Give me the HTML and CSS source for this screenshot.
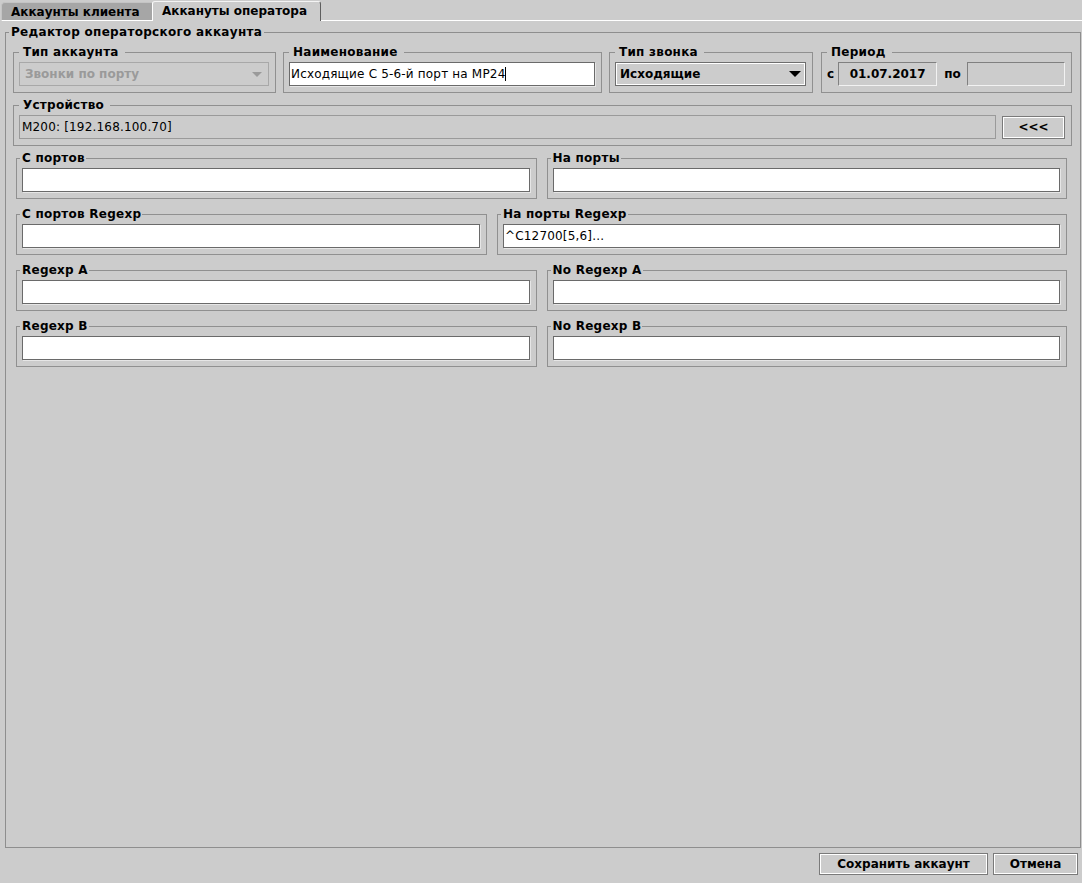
FILE: index.html
```html
<!DOCTYPE html>
<html lang="ru">
<head>
<meta charset="utf-8">
<title>Редактор операторского аккаунта</title>
<link rel="stylesheet" href="styles.css">
</head>
<body>
<div class="app">
  <div class="tabs">
    <div class="tab">Аккаунты клиента</div>
    <div class="tab active">Аккануты оператора</div>
    <div class="tab-fill"></div>
  </div>
  <div class="pane">
    <fieldset class="editor">
      <legend>Редактор операторского аккаунта</legend>
      <div class="editor-body">
        <div class="row row-top">
          <fieldset class="grp grp-top w-acct">
            <legend>Тип аккаунта</legend>
            <div class="grp-body">
              <div class="combo disabled"><span>Звонки по порту</span><span class="arrow"></span></div>
            </div>
          </fieldset>
          <fieldset class="grp grp-top w-name">
            <legend>Наименование</legend>
            <div class="grp-body">
              <div class="field">Исходящие С 5-6-й порт на МР24<span class="caret"></span></div>
            </div>
          </fieldset>
          <fieldset class="grp grp-top w-call">
            <legend>Тип звонка</legend>
            <div class="grp-body">
              <div class="combo"><span>Исходящие</span><span class="arrow"></span></div>
            </div>
          </fieldset>
          <fieldset class="grp grp-top w-period">
            <legend>Период</legend>
            <div class="grp-body period">
              <span class="plabel">с</span>
              <div class="date">01.07.2017</div>
              <span class="plabel plabel-to">по</span>
              <div class="date date-to"></div>
            </div>
          </fieldset>
        </div>

        <div class="row row-top row-gap">
          <fieldset class="grp grp-top w-full">
            <legend>Устройство</legend>
            <div class="grp-body device">
              <div class="field ro">M200: [192.168.100.70]</div>
              <button class="btn btn-back">&lt;&lt;&lt;</button>
            </div>
          </fieldset>
        </div>

        <div class="row row-grid row-gap">
          <fieldset class="grp grp-low half">
            <legend>С портов</legend>
            <div class="grp-body"><div class="field"></div></div>
          </fieldset>
          <fieldset class="grp grp-low half">
            <legend>На порты</legend>
            <div class="grp-body"><div class="field"></div></div>
          </fieldset>
        </div>

        <div class="row row-grid row-gap2">
          <fieldset class="grp grp-low w-from-re">
            <legend>С портов Regexp</legend>
            <div class="grp-body"><div class="field"></div></div>
          </fieldset>
          <fieldset class="grp grp-low w-to-re">
            <legend>На порты Regexp</legend>
            <div class="grp-body"><div class="field">^C12700[5,6]...</div></div>
          </fieldset>
        </div>

        <div class="row row-grid row-gap2">
          <fieldset class="grp grp-low half">
            <legend>Regexp A</legend>
            <div class="grp-body"><div class="field"></div></div>
          </fieldset>
          <fieldset class="grp grp-low half">
            <legend>No Regexp A</legend>
            <div class="grp-body"><div class="field"></div></div>
          </fieldset>
        </div>

        <div class="row row-grid row-gap2">
          <fieldset class="grp grp-low half">
            <legend>Regexp B</legend>
            <div class="grp-body"><div class="field"></div></div>
          </fieldset>
          <fieldset class="grp grp-low half">
            <legend>No Regexp B</legend>
            <div class="grp-body"><div class="field"></div></div>
          </fieldset>
        </div>
      </div>
    </fieldset>
    <div class="actions">
      <button class="btn btn-save">Сохранить аккаунт</button>
      <button class="btn btn-cancel">Отмена</button>
    </div>
  </div>
</div>
</body>
</html>
```

FILE: styles.css
```css
* { box-sizing: border-box; }
html, body { margin: 0; padding: 0; }
body {
  width: 1082px;
  height: 883px;
  overflow: hidden;
  background: #cccccc;
  font-family: "DejaVu Sans", "Liberation Sans", sans-serif;
  font-size: 12px;
  color: #000;
}
.app { display: flex; flex-direction: column; height: 883px; }

/* tabs */
.tabs { display: flex; height: 21px; align-items: flex-end; }
.tab {
  width: 151px;
  margin-left: 1px;
  height: 19px;
  padding: 1px 0 0 9px;
  background: #a6a6a6;
  border-top: 1px solid #c4c4c4;
  border-left: 1px solid #c4c4c4;
  border-bottom: 1px solid #ffffff;
  border-radius: 4px 0 0 0;
  font-weight: bold;
  line-height: 16px;
  white-space: nowrap;
}
.tab.active {
  width: 169px;
  margin-left: 0;
  height: 20px;
  padding: 1px 0 0 9px;
  background: #cccccc;
  border-top: 1px solid #f4f4f4;
  border-left: 1px solid #ffffff;
  border-right: 1px solid #5e5e5e;
  border-bottom: none;
  border-radius: 3px 3px 0 0;
  line-height: 17px;
}
.tab-fill { flex: 1; height: 1px; background: #ffffff; }

/* pane */
.pane { flex: 1; display: flex; flex-direction: column; min-height: 0; }

.editor {
  flex: 1;
  min-width: 0;
  margin: 4px 1px 0 5px;
  padding: 0;
  border: 1px solid #8e8e8e;
}
.editor > legend {
  margin-left: 3px;
  padding: 0 2px;
  font-weight: bold;
  line-height: 14px;
  letter-spacing: 0.3px;
  white-space: nowrap;
}
.editor-body { padding: 6px 8px 0 7px; }

.row { display: flex; }
.row-gap { margin-top: 5px; }
.row-gap2 { margin-top: 8px; }
.row-top { gap: 7px; }
.row-grid { gap: 10px; margin-left: 3px; margin-right: 5px; }

.grp {
  margin: 0;
  padding: 0;
  min-width: 0;
  border: 1px solid #909090;
}
.grp > legend {
  font-weight: bold;
  line-height: 14px;
  letter-spacing: 0.25px;
  white-space: nowrap;
}
.grp-top > legend { margin-left: 5px; padding: 0 6px 0 4px; }
.grp-low > legend { margin-left: 3px; padding: 0 1px 0 2px; }
.grp-body { padding: 3px 6px 6px 5px; }

.w-acct { width: 263px; }
.w-name { width: 319px; }
.w-call { width: 204px; }
.w-period { width: 251px; margin-left: 1px; }
.w-full { flex: 1; }
.half { flex: 1; }
.w-from-re { width: 471px; }
.w-to-re { flex: 1; }

/* controls */
.field {
  height: 24px;
  background: #ffffff;
  border: 1px solid #6a6a6a;
  box-shadow: 1px 1px 0 #e6e6e6;
  padding: 0 1px;
  line-height: 22px;
  letter-spacing: 0.18px;
  white-space: nowrap;
  overflow: hidden;
}
.caret {
  display: inline-block;
  width: 1px;
  height: 14px;
  background: #000;
  vertical-align: -3px;
}
.field.ro {
  background: transparent;
  border-color: #9a9a9a;
  box-shadow: none;
  padding-left: 2px;
}

.combo {
  height: 24px;
  display: flex;
  align-items: center;
  justify-content: space-between;
  padding: 0 4px 0 4px;
  border: 1px solid #6e6e6e;
  box-shadow: inset 1px 1px 0 #ffffff, inset -1px -1px 0 #ffffff;
  font-weight: bold;
  white-space: nowrap;
}
.arrow {
  width: 0;
  height: 0;
  border-left: 6px solid transparent;
  border-right: 6px solid transparent;
  border-top: 6px solid #000;
}
.combo.disabled {
  border-color: #a8a8a8;
  box-shadow: none;
  color: #9a9a9a;
  padding-left: 5px;
  padding-right: 6px;
}
.combo.disabled .arrow {
  border-left-width: 5px;
  border-right-width: 5px;
  border-top: 5px solid #9a9a9a;
}

.period { display: flex; align-items: center; padding-left: 5px; }
.plabel { font-weight: bold; margin-right: 4px; }
.plabel-to { margin: 0 6px 0 7px; }
.date {
  width: 99px;
  height: 24px;
  line-height: 22px;
  text-align: center;
  font-weight: bold;
  border: 1px solid;
  border-color: #808080 #f2f2f2 #f2f2f2 #808080;
}
.date-to { flex: 1; width: auto; }

.device { display: flex; align-items: center; gap: 6px; padding-left: 5px; }
.device .field { flex: 1; }

.btn {
  height: 23px;
  margin: 0;
  padding: 0;
  background: #cccccc;
  border: 1px solid #7a7a7a;
  box-shadow: inset 1px 1px 0 #ffffff, inset -1px -1px 0 #ffffff;
  font-family: "DejaVu Sans", "Liberation Sans", sans-serif;
  font-size: 12px;
  font-weight: bold;
  color: #000;
  white-space: nowrap;
}
.btn-back { width: 63px; }

.actions {
  display: flex;
  justify-content: flex-end;
  gap: 5px;
  padding: 5px 4px 8px 0;
}
.btn-save { width: 169px; height: 22px; }
.btn-cancel { width: 85px; height: 22px; }
```
